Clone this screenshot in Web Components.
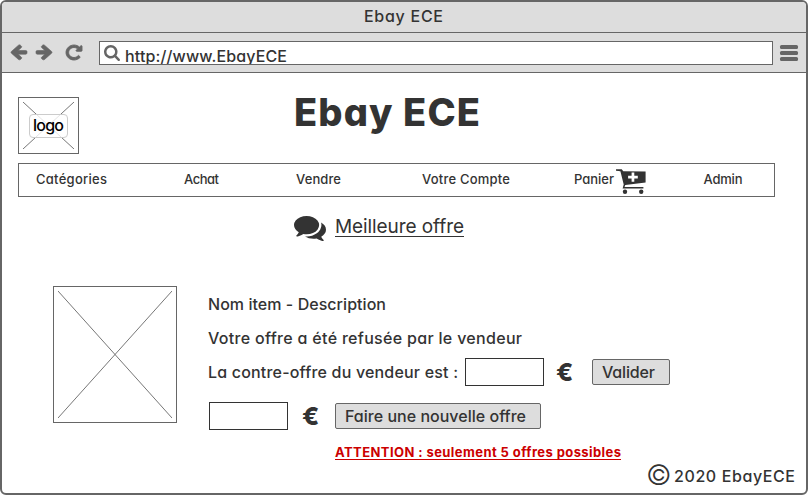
<!DOCTYPE html>
<html lang="fr">
<head>
<meta charset="utf-8">
<title>Ebay ECE</title>
<style>
html,body{margin:0;background:#fff}
body{width:808px;height:495px;overflow:hidden;font-family:Inter,Lato,"Liberation Sans",sans-serif;font-feature-settings:"cv11","calt" 0;color:#333}
</style>
</head>
<body>
<wire-page></wire-page>
<script>
class WireElement extends HTMLElement {
  constructor() {
    super();
    this.attachShadow({mode: 'open'}).innerHTML = this.constructor.markup;
  }
}

/* A single line of text spaced out to the width given in `w`. */
class FitText extends WireElement {
  static markup = `<style>
    :host{display:block;white-space:nowrap;flex:none;line-height:20px}
    span{display:inline-block}
  </style><span><slot></slot></span>`;
  connectedCallback() {
    const w = Number(this.getAttribute('w'));
    const size = Number(this.getAttribute('size') || 16);
    const span = this.shadowRoot.querySelector('span');
    this.style.fontSize = size + 'px';
    this.style.width = w + 'px';
    this.style.fontWeight = this.getAttribute('weight') || 500;
    const natural = span.getBoundingClientRect().width;
    const count = this.textContent.length;
    span.style.letterSpacing = ((w - natural) / Math.max(1, count - 1)) + 'px';
  }
}

const ICONS = {
  left: ['192 197 1472 1558', '<path d="M1664 896v128q0 53-32.500 90.500t-84.500 37.500h-704l293 294q38 36 38 90t-38 90l-75 76q-37 37-90 37-52 0-91-37l-651-652q-37-37-37-90 0-52 37-91l651-650q38-38 91-38 52 0 90 38l75 74q38 38 38 91t-38 91l-293 293h704q52 0 84.500 37.500t32.500 90.500z" stroke="currentColor" stroke-width="60"/>'],
  reload: ['128 128 1536 1536', '<path d="M1664 256v448q0 26-19 45t-45 19h-448q-42 0-59-40-17-39 14-69l138-138q-148-137-349-137-104 0-198.500 40.500t-163.500 109.500-109.500 163.500-40.500 198.500 40.500 198.500 109.500 163.500 163.500 109.500 198.500 40.500q119 0 225-52t179-147q7-10 23-12 15 0 25 9l137 138q9 8 9.500 20.500t-7.500 22.500q-109 132-264 204.500t-327 72.500q-156 0-298-61t-245-164-164-245-61-298 61-298 164-245 245-164 298-61q147 0 284.500 55.500t244.500 156.500l130-129q29-31 70-14 39 17 39 59z" stroke="currentColor" stroke-width="90"/>'],
  search: ['64 128 1664 1664', '<path d="M1216 832q0-185-131.500-316.500t-316.500-131.500-316.500 131.500-131.500 316.500 131.500 316.500 316.500 131.500 316.500-131.500 131.500-316.500zm512 832q0 52-38 90t-90 38q-54 0-90-38l-343-342q-179 124-399 124-143 0-273.500-55.500t-225-150-150-225-55.500-273.500 55.500-273.500 150-225 225-150 273.500-55.500 273.500 55.500 225 150 150 225 55.500 273.500q0 220-124 399l343 343q37 37 37 90z"/>'],
  menu: ['0 0 18 16', '<rect width="18" height="4" rx="1.500"/><rect y="6" width="18" height="4" rx="1.500"/><rect y="12" width="18" height="4" rx="1.500"/>'],
  chat: ['0 256 1792 1408', '<path d="M1408 768q0 139-94 257t-256.500 186.500-353.500 68.500q-86 0-176-16-124 88-278 128-36 9-86 16h-3q-11 0-20.500-8t-11.500-21q-1-3-1-6.500t.5-6.500 2-6l2.500-5 3.500-5.500 4-5 4.500-5 4-4.500q5-6 23-25t26-29.500 22.500-29 25-38.500 20.500-44q-124-72-195-177t-71-224q0-139 94-257t256.500-186.500 353.500-68.500 353.500 68.500 256.500 186.500 94 257zm384 256q0 120-71 224.500t-195 176.500q10 24 20.500 44t25 38.500 22.500 29 26 29.500 23 25q1 1 4 4.500t4.500 5 4 5 3.500 5.500l2.500 5 2 6 .5 6.500-1 6.500q-3 14-13 22t-22 7q-50-7-86-16-154-40-278-128-90 16-176 16-271 0-472-132 58 4 88 4 161 0 309-45t264-129q125-92 192-212t67-254q0-77-23-152 129 71 204 178t75 230z"/>'],
  cart: ['0 0 30 25', '<path d="M0 .2h5.700l1.600 2L29.600 2.400v11.100L9.300 15.900l-.8 2.200H27.400v1.400H6.600l1.100-4L4.400 2.200 0 1.700z"/><path d="M15.600 3.500h2.700v3.300h3.500v2.600h-3.500v3.300h-2.700v-3.300h-3.500V6.800h3.500z" fill="#fff"/><circle cx="9" cy="22.800" r="2.200"/><circle cx="25.200" cy="22.800" r="2.200"/>']
};
class WireIcon extends WireElement {
  static markup = `<style>:host{display:block;flex:none}svg{display:block;width:100%;height:100%;fill:currentColor;overflow:visible}</style>`;
  connectedCallback() {
    const [box, shape] = ICONS[this.getAttribute('name')];
    this.shadowRoot.innerHTML += `<svg viewBox="${box}" preserveAspectRatio="none">${shape}</svg>`;
  }
}

/* Crossed placeholder box; slotted content sits in its centre. */
class WireImage extends WireElement {
  static markup = `<style>
    :host{display:grid;box-sizing:border-box;border:1px solid #666;background:#fff;flex:none;padding:4px;place-items:center;overflow:hidden}
    svg,slot{grid-area:1/1}
    svg{width:100%;height:100%;min-width:0;min-height:0;display:block}
    slot{display:block;z-index:1}
  </style><svg viewBox="0 0 100 100" preserveAspectRatio="none"><path d="M0 0L100 100M100 0L0 100" stroke="#666" stroke-width=".9" vector-effect="non-scaling-stroke"/></svg><slot></slot>`;
}

class WireInput extends WireElement {
  static markup = `<style>:host{display:block;flex:none;box-sizing:border-box;width:79px;height:28px;border:1px solid #333;background:#fff}</style>`;
}

class WireButton extends WireElement {
  static markup = `<style>:host{display:flex;flex:none;box-sizing:border-box;height:26px;border:1px solid #666;border-radius:2px;background:#ddd;padding:2px 0 0 9px}</style><slot></slot>`;
}

class BrowserBar extends WireElement {
  static markup = `<style>
    :host{display:block;background:#ddd;color:#666}
    .title{box-sizing:border-box;padding:4px 0 0 362px;border-bottom:1px solid #666;height:31px;color:#333}
    .tools{display:flex;align-items:center;height:40px;box-sizing:border-box;border-bottom:1px solid #666;padding:0 7px 0 9px}
    .nav{width:16px;height:15px}
    .fwd{transform:scaleX(-1);margin-left:9px}
    .reload{width:16px;height:15px;margin-left:14px}
    .url{display:flex;box-sizing:border-box;width:674px;height:24px;border:1px solid #666;background:#fff;margin:0 7px 0 17px;padding:3px 0 0 4px;overflow:hidden}
    .url wire-icon{width:16px;height:16px}
    .url fit-text{color:#333;margin:1px 0 0 5px}
    .menu{width:18px;height:16px;margin-top:1px}
  </style>
  <div class="title"><fit-text w="79">Ebay ECE</fit-text></div>
  <div class="tools">
    <wire-icon class="nav" name="left"></wire-icon><wire-icon class="nav fwd" name="left"></wire-icon>
    <wire-icon class="reload" name="reload"></wire-icon>
    <div class="url"><wire-icon name="search"></wire-icon><fit-text w="162">http://www.EbayECE</fit-text></div>
    <wire-icon class="menu" name="menu"></wire-icon>
  </div>`;
}

class SiteNav extends WireElement {
  static markup = `<style>
    :host{display:grid;grid-template-columns:148px 112px 126px 152px 129.500px auto;box-sizing:border-box;width:757px;height:34px;border:1px solid #666;padding:5px 0 0 17px;margin-top:9px}
    div{display:flex}
    wire-icon{width:30px;height:25px;margin-left:1.500px}
  </style>
  <fit-text size="13" w="71">Catégories</fit-text>
  <fit-text size="13" w="35">Achat</fit-text>
  <fit-text size="13" w="45">Vendre</fit-text>
  <fit-text size="13" w="88">Votre Compte</fit-text>
  <div><fit-text size="13" w="40">Panier</fit-text><wire-icon name="cart"></wire-icon></div>
  <fit-text size="13" w="39">Admin</fit-text>`;
}

class OfferDetails extends WireElement {
  static markup = `<style>
    :host{display:block;padding-top:1px}
    .row{display:flex;align-items:center;height:34px}
    .new{margin-top:10px}
    .euro{line-height:28px;margin:0 20px 0 12px}
    .new .euro{margin:0 17px 0 14px}
    wire-input.after{margin-left:7px}
    .ok{width:78px}.again{width:206px}
    .warn{color:#c00;border-bottom:1px solid;line-height:17px;height:15px;margin:11px 0 0 127px}
  </style>
  <div class="row"><fit-text w="178">Nom item - Description</fit-text></div>
  <div class="row"><fit-text w="314">Votre offre a été refusée par le vendeur</fit-text></div>
  <div class="row"><fit-text w="250">La contre-offre du vendeur est :</fit-text><wire-input class="after"></wire-input>
    <fit-text class="euro" size="25" weight="800" w="16">€</fit-text><wire-button class="ok"><fit-text w="53">Valider</fit-text></wire-button></div>
  <div class="row new"><wire-input style="margin-left:1px"></wire-input>
    <fit-text class="euro" size="25" weight="800" w="16">€</fit-text><wire-button class="again"><fit-text w="181">Faire une nouvelle offre</fit-text></wire-button></div>
  <fit-text class="warn" size="13" weight="700" w="286">ATTENTION : seulement 5 offres possibles</fit-text>`;
}

class WirePage extends WireElement {
  static markup = `<style>
    :host{display:flex;flex-direction:column;box-sizing:border-box;width:808px;height:495px;border:2px solid #666;border-radius:6px;overflow:hidden;background:#fff}
    main{flex:1;padding:24px 16px 0;min-height:0;display:flex;flex-direction:column}
    header{display:flex;height:57px}
    .logo{width:61px;height:57px}
    .label{color:#000;background:rgba(255,255,255,.8);border:1px solid #ccc;border-radius:4px;padding:0 3px 2px;display:block}
    h1{margin:-9px 0 0 215px;font-weight:inherit}
    h1 fit-text{line-height:48px}
    .offer{display:flex;height:25px;margin:19px 0 0 276px}
    .offer wire-icon{width:32px;height:25px}
    .offer fit-text{margin:-1px 0 0 9px;line-height:23px;height:21px;border-bottom:1px solid}
    .item{display:flex;margin:45px 0 0 35px}
    .item wire-image{width:124px;height:137px;margin-right:31px}
    footer{display:flex;justify-content:flex-end;align-items:center;margin-top:5px;margin-right:-5px}
    .c{margin-right:5px;line-height:21px}
  </style>
  <browser-bar></browser-bar>
  <main>
    <header>
      <wire-image class="logo"><div class="label"><fit-text w="31">logo</fit-text></div></wire-image>
      <h1><fit-text size="38" weight="800" w="186">Ebay ECE</fit-text></h1>
    </header>
    <site-nav></site-nav>
    <div class="offer"><wire-icon name="chat"></wire-icon><fit-text size="19" weight="400" w="129">Meilleure offre</fit-text></div>
    <div class="item"><wire-image></wire-image><offer-details></offer-details></div>
    <footer><fit-text class="c" size="28" weight="300" w="23">©</fit-text><fit-text w="121">2020 EbayECE</fit-text></footer>
  </main>`;
}

customElements.define('fit-text', FitText);
customElements.define('wire-icon', WireIcon);
customElements.define('wire-image', WireImage);
customElements.define('wire-input', WireInput);
customElements.define('wire-button', WireButton);
customElements.define('browser-bar', BrowserBar);
customElements.define('site-nav', SiteNav);
customElements.define('offer-details', OfferDetails);
customElements.define('wire-page', WirePage);
</script>
</body>
</html>
